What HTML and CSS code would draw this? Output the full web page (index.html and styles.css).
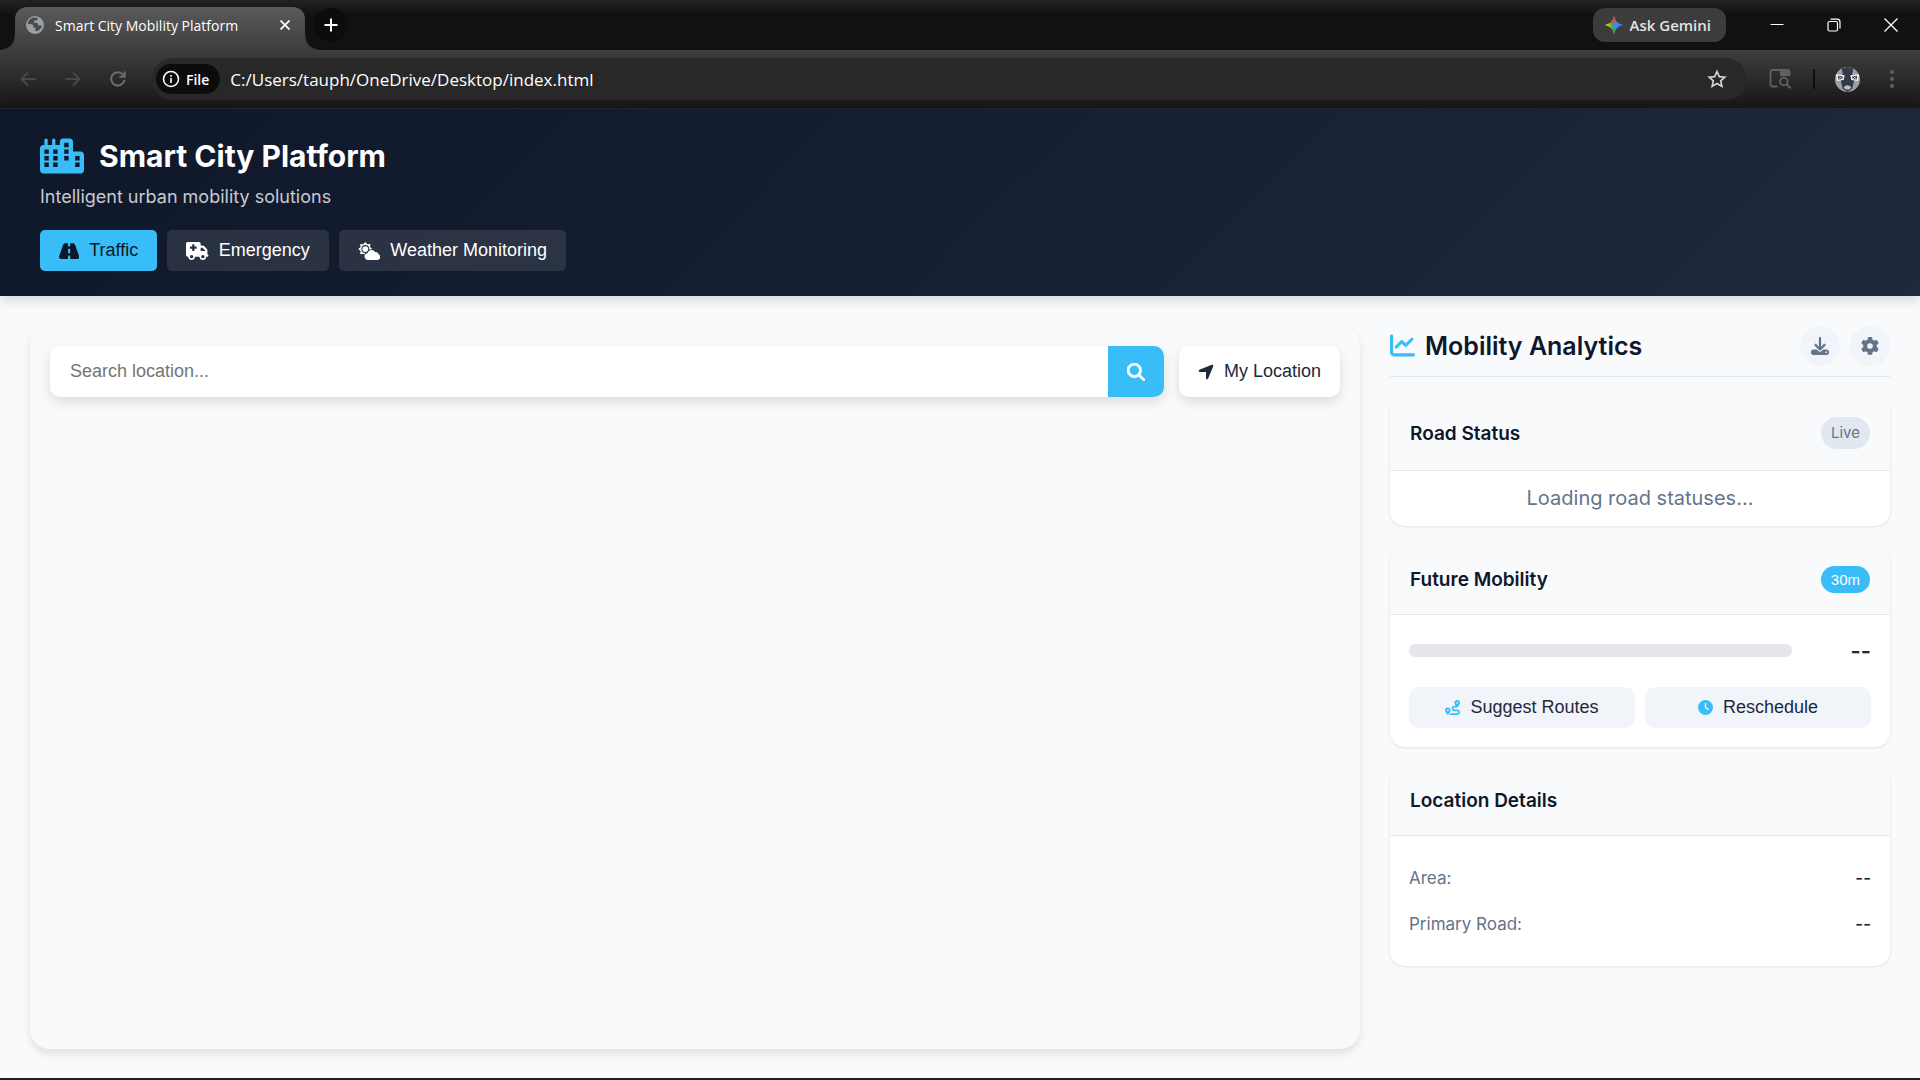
FILE: index.html
```html
<!DOCTYPE html>
<html lang="en">
<head>
  <meta charset="UTF-8" />
  <meta name="viewport" content="width=device-width, initial-scale=1.0" />
  <title>Smart City Mobility Platform</title>
  <link rel="stylesheet" href="styles.css">
</head>
<body>
  <!-- Browser window -->
  <div class="browser">
    <div class="tab-strip">
      <div class="tab">
        <svg class="favicon" viewBox="0 0 18 18"><circle cx="9" cy="9" r="9" fill="#9aa0a6"/><path d="M8 1.6C4.600 2 2 4.800 1.700 8l3.800.3c1.300 0 1.700.8 1.700 1.700v1.500h2.200v3.700c3.200-.2 6-2.600 6.600-5.700h-2.500c-1.200 0-1.700-.8-1.700-1.600V7H8.200V4.500h1.900c.9 0 1.500-.7 1.500-1.500V2.200C10.500 1.700 9.200 1.500 8 1.600z" fill="#4a4b4e"/></svg>
        <span class="tab-title">Smart City Mobility Platform</span>
        <button class="tab-close" aria-label="Close tab"><svg viewBox="0 0 10 10"><path d="M0.500 0.500l9 9M9.500 0.500l-9 9" stroke="#fff" stroke-width="1.700"/></svg></button>
      </div>
      <button class="new-tab" aria-label="New tab"><svg viewBox="0 0 14 14"><path d="M7 0.500v13M0.500 7h13" stroke="#fff" stroke-width="2"/></svg></button>
      <div class="window-controls">
        <button class="gemini">
          <svg viewBox="0 0 20 20">
            <defs>
              <linearGradient id="spark" x1="0" y1="0.600" x2="1" y2="0.400">
                <stop offset="0" stop-color="#fbbc04"/>
                <stop offset="0.200" stop-color="#fbbc04"/>
                <stop offset="0.420" stop-color="#34a853"/>
                <stop offset="0.550" stop-color="#4285f4"/>
                <stop offset="1" stop-color="#3186ff"/>
              </linearGradient>
              <linearGradient id="sparkTop" x1="0" y1="0" x2="0" y2="1">
                <stop offset="0" stop-color="#ea4335"/>
                <stop offset="0.200" stop-color="#ea4335"/>
                <stop offset="0.450" stop-color="#ea4335" stop-opacity="0"/>
                <stop offset="0.650" stop-color="#34a853" stop-opacity="0"/>
                <stop offset="0.850" stop-color="#34a853"/>
              </linearGradient>
            </defs>
            <path d="M10 0.500C11 6 14 9 19.500 10C14 11 11 14 10 19.500C9 14 6 11 0.500 10C6 9 9 6 10 0.500z" fill="url(#spark)"/>
            <path d="M10 0.500C11 6 14 9 19.500 10C14 11 11 14 10 19.500C9 14 6 11 0.500 10C6 9 9 6 10 0.500z" fill="url(#sparkTop)"/>
          </svg>
          Ask Gemini
        </button>
        <button class="win-btn" aria-label="Minimize"><svg viewBox="0 0 14 14"><path d="M0.500 6.500h13" stroke="#fff"/></svg></button>
        <button class="win-btn" aria-label="Restore"><svg viewBox="0 0 14 14" fill="none" stroke="#fff" stroke-width="1.200"><rect x="1" y="3.500" width="9.500" height="9.500" rx="1.500"/><path d="M3.500 1.200h6.500a3 3 0 0 1 3 3v6.300"/></svg></button>
        <button class="win-btn" aria-label="Close"><svg viewBox="0 0 14 14"><path d="M0.500 0.500l13 13M13.500 0.500l-13 13" stroke="#fff" stroke-width="1.300"/></svg></button>
      </div>
    </div>

    <div class="toolbar">
      <div class="nav-buttons">
        <button class="nav-btn" aria-label="Back"><svg viewBox="0 0 16 16"><path d="M15.500 8H1.500M8 1.500L1.500 8L8 14.500"/></svg></button>
        <button class="nav-btn" aria-label="Forward"><svg viewBox="0 0 16 16"><path d="M0.500 8h14M8 1.500L14.500 8L8 14.500"/></svg></button>
        <button class="nav-btn reload" aria-label="Reload"><svg viewBox="0 0 16 16"><path d="M14.500 9A6.700 6.700 0 1 1 13 3.500L14.500 5.500M14.800 0.500V5.800H9.500"/></svg></button>
      </div>
      <div class="omnibox">
        <button class="file-chip"><svg viewBox="0 0 18 18"><circle cx="9" cy="9" r="7.500" fill="none" stroke="#fff" stroke-width="1.600"/><path d="M9 8v5M9 5v1.700" stroke="#fff" stroke-width="1.600"/></svg>File</button>
        <input class="url" type="text" aria-label="Address" value="C:/Users/tauph/OneDrive/Desktop/index.html" />
        <button class="star" aria-label="Bookmark"><svg viewBox="0 0 20 20"><path d="M10 2.500l2.300 5.100 5.500.6-4.100 3.700 1.200 5.500L10 14.600l-4.900 2.800 1.200-5.500L2.200 8.200l5.500-.6z" fill="none" stroke="#d2d3d5" stroke-width="1.700"/></svg></button>
      </div>
      <div class="toolbar-right">
        <button class="lens" aria-label="Search tabs"><svg viewBox="0 0 22 20"><path d="M8.500 17.500H3.500a2 2 0 0 1-2-2V3a2 2 0 0 1 2-2h15a2 2 0 0 1 2 2v4" fill="none" stroke="#5f6165" stroke-width="1.800"/><path d="M11 1h9.500v6H11z" fill="#5f6165"/><circle cx="14.800" cy="12.500" r="3.800" fill="none" stroke="#5f6165" stroke-width="1.800"/><path d="M17.500 15.200l4 4" stroke="#5f6165" stroke-width="2"/></svg></button>
        <span class="divider"></span>
        <button class="avatar" aria-label="Profile"><svg viewBox="0 0 26 26"><circle cx="13" cy="13" r="13" fill="#98a1a8"/><path d="M7 1.500L13 0l6 1.500-1 6 2 6-2 9-5 3.500-5-3.500-2-9 2-6z" fill="#343b46"/><path d="M1 7.500l9 1-1 5-7 1zM25 7.500l-9 1 1 5 7 1z" fill="#f2f4f5"/><path d="M3 9l5 .5-.5 3-4 .5zM23 9l-5 .5.500 3 4 .5z" fill="#20242b"/><path d="M4 9.500l3 3M7 9.500l-3 3M22 9.500l-3 3M19 9.500l3 3" stroke="#f2f4f5" stroke-width=".8"/><path d="M9 21q4-4 8 0l-2 2.500h-4z" fill="#b9bfc4"/></svg></button>
        <button class="menu" aria-label="Menu"><svg viewBox="0 0 4 18" fill="#5f6165"><circle cx="2" cy="2" r="2"/><circle cx="2" cy="9" r="2"/><circle cx="2" cy="16" r="2"/></svg></button>
      </div>
    </div>
  </div>

  <!-- Header -->
  <header class="header">
    <div class="logo">
      <svg class="logo-icon" viewBox="0 0 640 512" fill="#38bdf8"><path fill-rule="evenodd" d="M480 48c0-26.500-21.500-48-48-48H336c-26.500 0-48 21.500-48 48V96H224V24c0-13.300-10.700-24-24-24s-24 10.700-24 24V96H112V24c0-13.300-10.700-24-24-24S64 10.700 64 24V96H48C21.500 96 0 117.500 0 144V464c0 26.500 21.500 48 48 48H592c26.500 0 48-21.500 48-48V240c0-26.500-21.500-48-48-48H480V48zM64 160h64v64H64zM64 256h64v64H64zM64 352h64v64H64zM192 160h64v64h-64zM192 256h64v64h-64zM192 352h64v64h-64zM352 64h64v64h-64zM352 160h64v64h-64zM352 256h64v64h-64zM512 256h64v64h-64zM512 352h64v64h-64z"/></svg>
      <h1>Smart City Platform</h1>
    </div>
    <p class="tagline">Intelligent urban mobility solutions</p>
    <nav class="nav">
      <button class="nav-tab active"><svg viewBox="0 0 576 512"><path d="M256 32H181.200c-27.100 0-51.300 17.100-60.300 42.600L3.100 407.200C1.100 413 0 419.200 0 425.400C0 455.500 24.500 480 54.600 480H256V416c0-17.700 14.300-32 32-32s32 14.300 32 32v64H521.400c30.200 0 54.600-24.500 54.600-54.600c0-6.200-1.100-12.400-3.100-18.200L455.100 74.600C446 49.100 421.900 32 394.800 32H320V96c0 17.700-14.300 32-32 32s-32-14.300-32-32V32zm64 192v64c0 17.700-14.300 32-32 32s-32-14.300-32-32V224c0-17.700 14.300-32 32-32s32 14.300 32 32z"/></svg>Traffic</button>
      <button class="nav-tab"><svg viewBox="0 0 640 512"><path d="M0 48C0 21.500 21.500 0 48 0H368c26.500 0 48 21.500 48 48V96h50.700c17 0 33.300 6.700 45.300 18.700L589.300 192c12 12 18.700 28.300 18.700 45.300V256v32 64c17.700 0 32 14.300 32 32s-14.300 32-32 32H576c0 53-43 96-96 96s-96-43-96-96H256c0 53-43 96-96 96s-96-43-96-96H48c-26.500 0-48-21.500-48-48V48zM416 256H544V237.300L466.700 160H416v96zM160 464a48 48 0 1 0 0-96 48 48 0 1 0 0 96zm368-48a48 48 0 1 0 -96 0 48 48 0 1 0 96 0zM176 80v48l-48 0c-8.800 0-16 7.200-16 16v32c0 8.800 7.200 16 16 16h48v48c0 8.800 7.200 16 16 16h32c8.800 0 16-7.200 16-16V192h48c8.800 0 16-7.200 16-16V144c0-8.800-7.200-16-16-16H240V80c0-8.800-7.200-16-16-16H192c-8.800 0-16 7.200-16 16z"/></svg>Emergency</button>
      <button class="nav-tab"><svg viewBox="0 0 640 512"><path fill-rule="evenodd" d="M208 0L264 66L354 54L342 144L408 200L342 256L354 346L264 334L208 400L152 334L62 346L74 256L8 200L74 144L62 54L152 66zM208 88a112 112 0 1 0 0 224a112 112 0 1 0 0-224z"/><circle cx="208" cy="200" r="82"/><path class="cloud" d="M288 512c-57 0-104-44-104-98 0-50 38-90 88-96 8-54 56-94 112-94 46 0 84 26 102 64 8-2 14-4 22-4 40 0 72 28 76 66 32 10 56 40 56 74 0 48-38 88-88 88z"/></svg>Weather Monitoring</button>
    </nav>
  </header>

  <!-- Content -->
  <main class="main">
    <section class="map-card">
      <div class="search-row">
        <form class="search-box">
          <input type="text" aria-label="Search location" placeholder="Search location..." />
          <button type="button" class="search-btn" aria-label="Search"><svg class="icon" viewBox="0 0 512 512"><path d="M416 208c0 45.900-14.900 88.300-40 122.700L502.600 457.400c12.500 12.500 12.500 32.800 0 45.300s-32.800 12.500-45.300 0L330.700 376c-34.400 25.200-76.800 40-122.700 40C93.100 416 0 322.900 0 208S93.100 0 208 0S416 93.100 416 208zM208 352a144 144 0 1 0 0-288 144 144 0 1 0 0 288z"/></svg></button>
        </form>
        <button class="locate-btn"><svg viewBox="0 0 448 512"><path d="M429.600 92.100c4.900-11.900 2.100-25.600-7-34.700s-22.800-11.900-34.700-7l-352 144c-14.200 5.800-22.200 20.800-19.300 35.800s16.100 25.800 31.400 25.800H224V432c0 15.300 10.800 28.400 25.800 31.400s30-5.100 35.800-19.300l144-352z"/></svg>My Location</button>
      </div>
    </section>

    <aside class="panel">
      <div class="panel-header">
        <h2><svg viewBox="0 0 512 512"><path d="M64 64c0-17.700-14.300-32-32-32S0 46.300 0 64V400c0 44.200 35.800 80 80 80H480c17.700 0 32-14.300 32-32s-14.300-32-32-32H80c-8.800 0-16-7.200-16-16V64zm406.600 86.600c12.500-12.500 12.500-32.800 0-45.300s-32.800-12.500-45.300 0L320 210.700l-57.400-57.400c-12.500-12.500-32.800-12.500-45.300 0l-112 112c-12.500 12.500-12.500 32.800 0 45.300s32.800 12.500 45.300 0L240 221.300l57.400 57.400c12.500 12.500 32.800 12.500 45.300 0l128-128z"/></svg>Mobility Analytics</h2>
        <div class="panel-actions">
          <button class="round-btn" aria-label="Download"><svg class="icon" viewBox="0 0 512 512"><path d="M288 32c0-17.700-14.300-32-32-32s-32 14.300-32 32V274.700l-73.400-73.400c-12.500-12.500-32.800-12.500-45.300 0s-12.500 32.800 0 45.300l128 128c12.500 12.500 32.800 12.500 45.300 0l128-128c12.500-12.500 12.500-32.800 0-45.300s-32.800-12.500-45.300 0L288 274.700V32zM64 352c-35.300 0-64 28.700-64 64v32c0 35.300 28.700 64 64 64H448c35.300 0 64-28.700 64-64V416c0-35.300-28.700-64-64-64H346.500l-45.300 45.300c-25 25-65.500 25-90.500 0L165.500 352H64zm368 56a24 24 0 1 1 0 48 24 24 0 1 1 0-48z"/></svg></button>
          <button class="round-btn" aria-label="Settings"><svg class="icon" viewBox="0 0 512 512"><path d="M495.900 166.600c3.200 8.700 .5 18.400-6.400 24.600l-43.300 39.400c1.100 8.300 1.700 16.800 1.700 25.400s-.6 17.100-1.700 25.400l43.300 39.400c6.900 6.200 9.600 15.900 6.400 24.600c-4.400 11.900-9.700 23.300-15.800 34.300l-4.700 8.100c-6.600 11-14 21.400-22.100 31.200c-5.900 7.200-15.700 9.600-24.500 6.800l-55.700-17.700c-13.400 10.300-28.200 18.900-44 25.400l-12.500 57.100c-2 9.100-9 16.300-18.200 17.800c-13.800 2.300-28 3.500-42.500 3.500s-28.700-1.200-42.500-3.500c-9.200-1.500-16.200-8.700-18.200-17.800l-12.500-57.100c-15.800-6.500-30.600-15.100-44-25.400L83.100 425.900c-8.800 2.800-18.600 .3-24.500-6.800c-8.100-9.800-15.500-20.200-22.100-31.200l-4.700-8.100c-6.100-11-11.400-22.400-15.800-34.300c-3.200-8.700-.5-18.400 6.400-24.600l43.300-39.400C64.600 273.100 64 264.600 64 256s.6-17.100 1.700-25.400L22.400 191.200c-6.900-6.200-9.600-15.900-6.400-24.600c4.400-11.900 9.700-23.300 15.800-34.300l4.700-8.100c6.600-11 14-21.400 22.100-31.200c5.900-7.200 15.700-9.600 24.500-6.800l55.700 17.700c13.400-10.300 28.200-18.900 44-25.400l12.500-57.100c2-9.100 9-16.300 18.200-17.800C227.300 1.200 241.500 0 256 0s28.700 1.200 42.500 3.500c9.200 1.500 16.200 8.700 18.200 17.800l12.500 57.100c15.800 6.500 30.600 15.100 44 25.400l55.700-17.700c8.800-2.800 18.600-.3 24.500 6.800c8.100 9.800 15.500 20.200 22.100 31.200l4.700 8.100c6.100 11 11.400 22.400 15.800 34.300zM256 336a80 80 0 1 0 0-160 80 80 0 1 0 0 160z"/></svg></button>
        </div>
      </div>

      <section class="card">
        <div class="card-header">
          <h3>Road Status</h3>
          <span class="badge live">Live</span>
        </div>
        <p class="loading">Loading road statuses...</p>
      </section>

      <section class="card">
        <div class="card-header">
          <h3>Future Mobility</h3>
          <span class="badge time">30m</span>
        </div>
        <div class="card-body">
          <div class="prediction">
            <div class="bar"></div>
            <span class="prediction-value">--</span>
          </div>
          <div class="actions">
            <button class="action-btn"><svg viewBox="0 0 512 512"><path d="M512 96c0 50.200-59.100 125.100-84.600 155c-3.800 4.400-9.400 6.100-14.500 5H320c-17.700 0-32 14.300-32 32s14.300 32 32 32h96c53 0 96 43 96 96s-43 96-96 96H139.600c8.700-9.900 19.300-22.600 30-36.800c6.300-8.400 12.800-17.600 19-27.200H416c17.700 0 32-14.300 32-32s-14.300-32-32-32H320c-53 0-96-43-96-96s43-96 96-96h39.800c-21-31.500-39.800-67.700-39.800-96c0-53 43-96 96-96s96 43 96 96zM117.100 489.100c-3.800 4.300-7.200 8.100-10.100 11.300l-1.800 2-.2-.2c-6 4.600-14.600 4-20-1.800C59.800 473 0 402.500 0 352c0-53 43-96 96-96s96 43 96 96c0 30-21.100 67-43.500 97.900c-10.700 14.700-21.700 28-30.800 38.500l-.6 .7zM128 352a32 32 0 1 0 -64 0 32 32 0 1 0 64 0zM416 128a32 32 0 1 0 0-64 32 32 0 1 0 0 64z"/></svg>Suggest Routes</button>
            <button class="action-btn"><svg viewBox="0 0 512 512"><path fill-rule="evenodd" d="M256 0a256 256 0 1 1 0 512A256 256 0 1 1 256 0zM232 120V256c0 8 4 15.500 10.700 20l96 64c11 7.400 25.900 4.400 33.300-6.700s4.400-25.900-6.700-33.300L280 243.200V120c0-13.300-10.700-24-24-24s-24 10.700-24 24z"/></svg>Reschedule</button>
          </div>
        </div>
      </section>

      <section class="card">
        <div class="card-header">
          <h3>Location Details</h3>
        </div>
        <dl class="details">
          <div class="detail"><dt>Area:</dt><dd>--</dd></div>
          <div class="detail"><dt>Primary Road:</dt><dd>--</dd></div>
        </dl>
      </section>
    </aside>
  </main>
</body>
</html>
```

FILE: styles.css
```css
* {
  margin: 0;
  padding: 0;
  box-sizing: border-box;
}

body {
  display: flex;
  flex-direction: column;
  min-height: 100vh;
  background: #f8fafc;
  border-bottom: 2px solid #202024;
  color: #1e293b;
  font-family: Inter, 'Open Sans', sans-serif;
}

button, input {
  border: none;
  background: none;
  color: inherit;
  font-family: 'Liberation Sans', Arial, sans-serif;
  font-size: 18px;
}

button {
  display: flex;
  align-items: center;
  justify-content: center;
  cursor: pointer;
  white-space: nowrap;
}

svg {
  display: block;
  flex-shrink: 0;
}

/* Browser window */
.browser,
.browser button,
.browser input {
  font-family: 'Open Sans', 'Noto Sans', sans-serif;
  color: #fff;
}

.tab-strip {
  display: flex;
  align-items: center;
  height: 50px;
  padding-left: 15px;
  background: linear-gradient(#232323, #111 15px);
}

.tab {
  position: relative;
  display: flex;
  align-items: center;
  align-self: flex-end;
  width: 290px;
  height: 43px;
  padding: 0 15px 7px 11px;
  background: linear-gradient(#5a5a5a, #3e3e3e);
  border-radius: 12px 12px 0 0;
}

/* curved feet of the active tab */
.tab::before,
.tab::after {
  content: "";
  position: absolute;
  bottom: 0;
  width: 14px;
  height: 14px;
}

.tab::before {
  left: -14px;
  background: radial-gradient(circle at 0 0, transparent 13px, #3e3e3e 14px);
}

.tab::after {
  right: -14px;
  background: radial-gradient(circle at 100% 0, transparent 13px, #3e3e3e 14px);
}

.favicon {
  width: 18px;
  height: 18px;
}

.tab-title {
  flex: 1;
  margin-left: 11px;
  font-size: 14px;
  white-space: nowrap;
}

.tab-close svg {
  width: 10px;
  height: 10px;
}

.new-tab {
  width: 34px;
  height: 34px;
  margin-left: 9px;
  border-radius: 50%;
  background: #0c0c0c;
}

.new-tab svg {
  width: 14px;
  height: 14px;
}

.window-controls {
  display: flex;
  align-items: center;
  margin-left: auto;
  padding-right: 1px;
}

.browser .gemini {
  gap: 6px;
  height: 34px;
  margin-right: 22px;
  padding: 0 15px 0 11px;
  border-radius: 12px;
  background: #3c3c3c;
  color: #e3e3e3;
  font-size: 15px;
  font-weight: 600;
}

.gemini svg {
  width: 20px;
  height: 20px;
}

.win-btn {
  width: 57px;
  height: 50px;
}

.win-btn svg {
  width: 14px;
  height: 14px;
}

.toolbar {
  display: flex;
  align-items: center;
  height: 59px;
  background: linear-gradient(#3e3e3e, #161616);
  border-bottom: 1px solid #24262b;
}

.nav-buttons {
  display: flex;
  width: 152px;
  padding-left: 5px;
}

.nav-btn {
  width: 45px;
  height: 34px;
}

.nav-btn svg {
  width: 16px;
  height: 16px;
  fill: none;
  stroke: #47484a;
  stroke-width: 2;
}

.reload svg {
  stroke: #6b6c6f;
}

.omnibox {
  display: flex;
  flex: 1;
  align-items: center;
  height: 42px;
  padding: 0 20px 0 4px;
  border-radius: 21px;
  background: #282828;
}

.browser .file-chip {
  gap: 6px;
  height: 30px;
  padding: 0 11px 0 6px;
  border-radius: 15px;
  background: #0c0c0c;
  font-size: 14px;
  font-weight: 600;
}

.file-chip svg {
  width: 18px;
  height: 18px;
}

.url {
  flex: 1;
  min-width: 0;
  margin-left: 10px;
  font-size: 17px;
}

.star svg {
  width: 20px;
  height: 20px;
}

.toolbar-right {
  display: flex;
  align-items: center;
  padding: 0 26px 0 22px;
}

.lens svg {
  width: 22px;
  height: 20px;
}

.divider {
  width: 2px;
  height: 20px;
  margin: 0 20px 0 22px;
  background: #0c0c0c;
}

.avatar svg {
  width: 25px;
  height: 25px;
}

.menu {
  margin-left: 30px;
}

.menu svg {
  width: 4px;
  height: 18px;
}

/* Header */
.header {
  padding: 28px 40px 25px;
  background: linear-gradient(135deg, #0f172a, #1e293b);
  box-shadow: 0 4px 12px rgba(0, 0, 0, 0.15);
  color: #fff;
}

.logo {
  display: flex;
  align-items: center;
  gap: 15px;
  height: 38px;
}

.logo-icon {
  width: 44px;
  height: 36px;
}

h1 {
  font-size: 30px;
  font-weight: 700;
}

.tagline {
  margin: 9px 0 20px;
  color: #c7cad0;
  font-size: 18px;
  line-height: 26px;
}

.nav {
  display: flex;
  gap: 10px;
}

.nav-tab {
  gap: 10px;
  height: 41px;
  padding: 0 19px;
  border-radius: 5px;
  background: rgba(255, 255, 255, 0.1);
  color: #fff;
}

.nav-tab.active {
  background: #38bdf8;
  color: #0f172a;
}

.nav-tab svg {
  height: 18px;
  fill: currentColor;
}

.cloud {
  paint-order: stroke;
  stroke: #2a3142;
  stroke-width: 40px;
}

/* Content */
.main {
  display: flex;
  flex: 1;
  gap: 30px;
  padding: 29px 30px;
}

.map-card {
  flex: 1;
  padding: 21px 20px;
  border-radius: 20px;
  background: #f8fafc;
  box-shadow: 0 5px 8px rgba(0, 0, 0, 0.1);
}

.search-row {
  display: flex;
  gap: 15px;
  height: 51px;
}

.search-box {
  display: flex;
  flex: 1;
  overflow: hidden;
  border-radius: 10px;
  background: #fff;
  box-shadow: 0 5px 12px rgba(0, 0, 0, 0.12);
}

.search-box input {
  flex: 1;
  padding: 0 20px;
}

.search-box input::placeholder {
  color: #757575;
}

.icon {
  width: 18px;
  height: 18px;
  fill: currentColor;
}

.search-btn {
  width: 56px;
  background: #38bdf8;
  color: #fff;
}

.search-btn .icon {
  stroke: currentColor;
  stroke-width: 20px;
}

.locate-btn {
  gap: 10px;
  padding: 0 19px;
  border-radius: 10px;
  background: #fff;
  box-shadow: 0 5px 12px rgba(0, 0, 0, 0.12);
}

.locate-btn svg {
  width: 16px;
  height: 18px;
  fill: currentColor;
}

/* Analytics panel */
.panel {
  display: flex;
  flex-direction: column;
  gap: 20px;
  width: 500px;
}

.panel-header {
  display: flex;
  align-items: center;
  justify-content: space-between;
  height: 52px;
  padding-bottom: 10px;
  border-bottom: 1px solid #e2e8f0;
}

h2 {
  display: flex;
  align-items: center;
  gap: 10px;
  color: #0f172a;
  font-size: 25px;
  font-weight: 600;
}

h2 svg {
  width: 25px;
  height: 25px;
  fill: #38bdf8;
}

.panel-actions {
  display: flex;
  gap: 10px;
}

.round-btn {
  width: 40px;
  height: 40px;
  border-radius: 50%;
  background: #f1f5f9;
  color: #64748b;
}

.card {
  overflow: hidden;
  border-radius: 15px;
  background: #fff;
  box-shadow: 0 1px 3px rgba(0, 0, 0, 0.1);
}

.card-header {
  display: flex;
  align-items: center;
  justify-content: space-between;
  min-height: 69px;
  padding: 20px 20px 21px;
  background: #f8fafc;
  border-bottom: 1px solid #e2e8f0;
}

h3 {
  color: #0f172a;
  font-size: 19px;
  font-weight: 600;
}

.badge {
  padding: 0 10px;
  border-radius: 16px;
}

.live {
  background: #e2e8f0;
  color: #64748b;
  font-size: 15px;
  line-height: 32px;
}

.time {
  background: #38bdf8;
  color: #fff;
  font-family: 'Liberation Sans', Arial, sans-serif;
  font-size: 15px;
  line-height: 27px;
}

.loading {
  padding: 12px 20px;
  color: #64748b;
  font-size: 20px;
  line-height: 31px;
  text-align: center;
}

.card-body {
  padding: 20px 19px 19px;
}

.prediction {
  display: flex;
  align-items: center;
  justify-content: space-between;
  height: 31px;
  margin-bottom: 21px;
}

.bar {
  width: 83%;
  height: 13px;
  border-radius: 6px;
  background: #e5e7eb;
}

.prediction-value {
  font-size: 22px;
  font-weight: 600;
}

.actions {
  display: flex;
  gap: 10px;
}

.action-btn {
  flex: 1;
  gap: 10px;
  height: 41px;
  border-radius: 10px;
  background: #f1f5f9;
}

.action-btn svg {
  width: 15px;
  height: 15px;
  fill: #38bdf8;
}

.details {
  padding: 19px;
}

.detail {
  display: flex;
  align-items: center;
  justify-content: space-between;
  height: 46px;
  font-size: 17px;
}

.detail dt {
  color: #64748b;
}

.detail dd {
  font-weight: 500;
}
```
